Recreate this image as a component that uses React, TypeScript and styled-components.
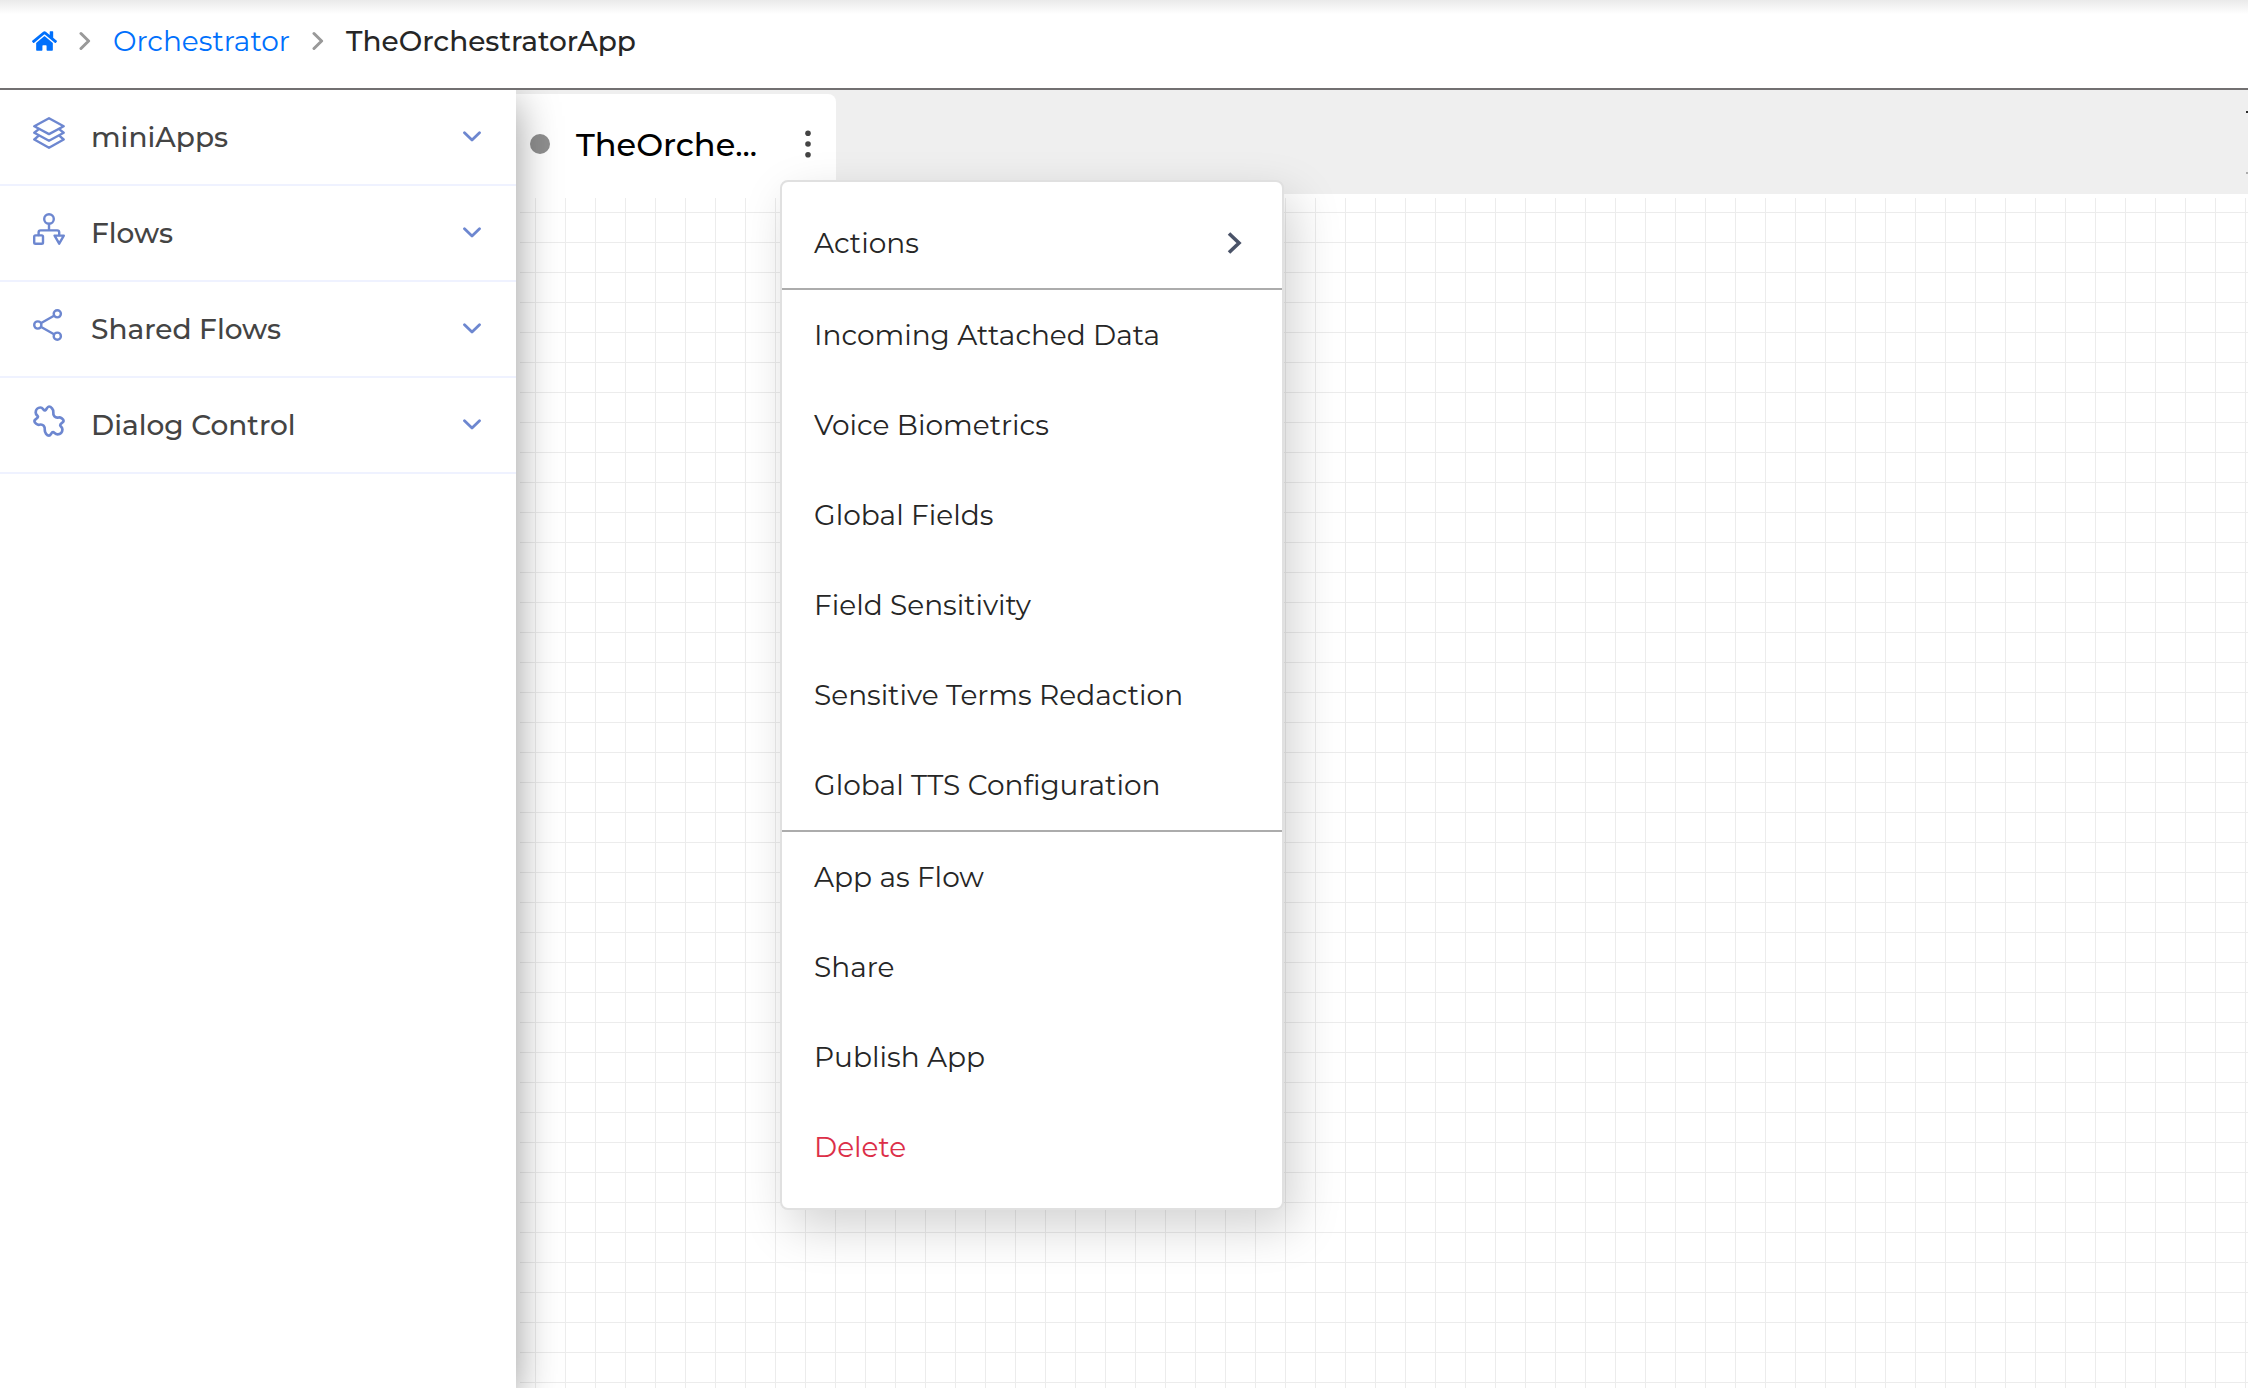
import React from "react";
import styled, { createGlobalStyle } from "styled-components";
import { FaHome } from "react-icons/fa";

const GlobalStyle = createGlobalStyle`
  *, *::before, *::after {
    box-sizing: border-box;
  }
  body {
    margin: 0;
    background: #ffffff;
    color: #262626;
    font-family: Montserrat, "DejaVu Sans", sans-serif;
    font-size: 28px;
    line-height: 36px;
  }
  button {
    border: 0;
    padding: 0;
    background: transparent;
    color: inherit;
    font: inherit;
    text-align: left;
    cursor: pointer;
  }
`;

const Page = styled.div`
  display: flex;
  flex-direction: column;
  min-height: 100vh;
  overflow: hidden;
`;

const Header = styled.header`
  position: relative;
  z-index: 3;
  display: flex;
  align-items: center;
  height: 90px;
  padding: 0 32px 6px;
  border-bottom: 2px solid #727071;
  background: linear-gradient(#eaeaea, #ffffff 14px);
`;

const Breadcrumbs = styled.nav`
  display: flex;
  align-items: center;
  gap: 22px;
`;

const HomeLink = styled.a`
  display: flex;
  color: #0070fc;

  svg {
    width: 25px;
    height: 24px;
  }
`;

const CrumbLink = styled.a`
  color: #0070fc;
  text-decoration: none;
`;

const CrumbCurrent = styled.span`
  font-weight: 500;
`;

const Body = styled.div`
  display: flex;
  flex: 1;
`;

const Sidebar = styled.aside`
  position: relative;
  z-index: 1;
  flex: 0 0 516px;
  background: #ffffff;
  box-shadow: 0 12px 40px rgba(0, 0, 0, 0.4);
`;

const SectionButton = styled.button`
  display: flex;
  align-items: center;
  gap: 26px;
  width: 100%;
  height: 96px;
  padding: 0 34px 0 33px;
  border-bottom: 2px solid #eff2ff;
  color: #444444;
  font-weight: 500;
`;

const SectionIcon = styled.span`
  display: flex;
  height: 40px;
  color: #6d87d0;
`;

const SectionLabel = styled.span`
  flex: 1;
`;

const Workspace = styled.main`
  display: flex;
  flex: 1;
  flex-direction: column;
  min-width: 0;
`;

const TabBar = styled.div`
  display: flex;
  height: 104px;
  padding-top: 4px;
  background: #efefef;
`;

const Tab = styled.div`
  display: flex;
  align-items: center;
  padding-left: 14px;
  border-radius: 0 8px 0 0;
  background: #ffffff;
`;

const StatusDot = styled.span`
  width: 20px;
  height: 20px;
  border-radius: 50%;
  background: #8f8f8f;
`;

const TabTitle = styled.span`
  width: 204px;
  margin-left: 26px;
  padding-top: 2px;
  color: #000000;
  font-size: 32px;
  font-weight: 500;
`;

const MenuAnchor = styled.div`
  position: relative;
  z-index: 2;
`;

const KebabButton = styled.button`
  display: flex;
  align-items: center;
  justify-content: center;
  width: 56px;
  height: 72px;
  color: #444444;
`;

const Menu = styled.div`
  position: absolute;
  top: 100%;
  left: 0;
  width: 504px;
  padding: 0 0 16px;
  border: 2px solid #e0e0e0;
  border-radius: 8px;
  background: #ffffff;
  box-shadow: 10px 18px 48px rgba(0, 0, 0, 0.175);
`;

const MenuGroup = styled.div<{ $first?: boolean }>`
  padding-top: ${(p) => (p.$first ? "16px" : "0")};

  & + & {
    border-top: 2px solid #acacac;
  }
`;

const MenuItem = styled.button<{ $danger?: boolean }>`
  display: flex;
  align-items: center;
  justify-content: space-between;
  width: 100%;
  height: 90px;
  padding: 0 40px 0 32px;
  color: ${(p) => (p.$danger ? "#dc2f48" : "#262626")};
`;

const ToolbarEdge = styled.div`
  width: 2px;
  height: 63px;
  margin: 17px 0 0 auto;
  border-top: 2px solid #2b2b2b;
  border-bottom: 2px solid #acacac;
`;

const Canvas = styled.div`
  flex: 1;
  margin: 4px 0 0 4px;
  background-image: linear-gradient(#ececec 1px, transparent 1px),
    linear-gradient(90deg, #ececec 1px, transparent 1px);
  background-position: 15px 14px;
  background-size: 30px 30px;
`;

function CrumbChevron() {
  return (
    <svg width="12" height="20" viewBox="0 0 12 20" fill="none" stroke="#999999" strokeWidth="3" strokeLinecap="round" strokeLinejoin="round" aria-hidden="true">
      <path d="M2 2.5 L9.6 10 L2 17.5" />
    </svg>
  );
}

function DownChevron() {
  return (
    <svg width="20" height="12" viewBox="0 0 20 12" fill="none" stroke="#6d87d0" strokeWidth="2.8" strokeLinecap="round" strokeLinejoin="round" aria-hidden="true">
      <path d="M2.5 1.7 L10 9 L17.5 1.7" />
    </svg>
  );
}

function SubmenuChevron() {
  return (
    <svg width="15" height="22" viewBox="0 0 15 22" fill="none" stroke="#4a5368" strokeWidth="3.6" aria-hidden="true">
      <path d="M2 1.5 L12 11 L2 20.5" />
    </svg>
  );
}

function KebabDots() {
  return (
    <svg width="8" height="28" viewBox="0 0 8 28" fill="currentColor" aria-hidden="true">
      <circle cx="4" cy="3.3" r="2.8" />
      <circle cx="4" cy="14" r="2.8" />
      <circle cx="4" cy="24.7" r="2.8" />
    </svg>
  );
}

function LineIcon({ children }: { children: React.ReactNode }) {
  return (
    <svg width="32" height="32" viewBox="0 0 32 32" fill="none" stroke="currentColor" strokeWidth="2.4" strokeLinecap="round" strokeLinejoin="round" aria-hidden="true">
      {children}
    </svg>
  );
}

const LayersIcon = () => (
  <LineIcon>
    <path d="M16 1.3 L30.7 9.3 L16 17.1 L1.3 9.3 Z" />
    <path d="M5.2 12.6 L1.3 15.7 L16 23.7 L30.7 15.7 L26.8 12.6" />
    <path d="M5.2 19.1 L1.3 22.5 L16 30.7 L30.7 22.5 L26.8 19.1" />
  </LineIcon>
);

const FlowIcon = () => (
  <LineIcon>
    <circle cx="16" cy="6" r="4.8" />
    <path d="M16 11 V17.4 M5.6 22 V19.4 Q5.6 17.4 7.6 17.4 H24.2 Q26.2 17.4 26.2 19.4 V22" />
    <rect x="1.2" y="22.4" width="8.8" height="8.4" rx="1.3" />
    <path d="M21.6 22.6 H30.8 L26.2 30.7 Z" />
  </LineIcon>
);

const ShareIcon = () => (
  <LineIcon>
    <circle cx="24.3" cy="4.8" r="3.6" />
    <circle cx="4.8" cy="16" r="3.6" />
    <circle cx="24.3" cy="27.2" r="3.6" />
    <path d="M8.2 14 L21 6.7 M8.2 18 L21 25.3" />
  </LineIcon>
);

const PuzzleIcon = () => (
  <LineIcon>
    <path
      strokeWidth="2.7"
      d="M12 5.4 C13.6 4.8 14.2 1.5 16 1.5 C18 1.5 20.6 4.4 20.3 7 C19.9 10.6 22 13.3 25.6 12.5 C27.6 12.1 30.6 14.2 30.6 16 C30.6 17.7 27.2 18.3 27.2 20.2 C27.2 21.4 29.4 22 29.4 24.6 C29.4 27.4 27.4 29.4 24.6 29.4 C22 29.4 21.4 27.2 20 27.2 C18.2 27.2 17.8 30.6 16 30.6 C14 30.6 11.6 27.8 11.8 25.2 C12.2 21.4 10 18.8 6.4 19.7 C4.4 20.2 1.4 17.9 1.4 16 C1.4 14.2 5 13.6 5 11.8 C5 10.6 2.7 10 2.7 7.4 C2.7 4.6 4.8 2.5 7.4 2.5 C10 2.5 10.6 5.8 12 5.4 Z"
    />
  </LineIcon>
);

const sections = [
  { label: "miniApps", Icon: LayersIcon },
  { label: "Flows", Icon: FlowIcon },
  { label: "Shared Flows", Icon: ShareIcon },
  { label: "Dialog Control", Icon: PuzzleIcon },
];

const settingsItems = [
  "Incoming Attached Data",
  "Voice Biometrics",
  "Global Fields",
  "Field Sensitivity",
  "Sensitive Terms Redaction",
  "Global TTS Configuration",
];

const appItems = ["App as Flow", "Share", "Publish App"];

export default function App() {
  return (
    <Page>
      <GlobalStyle />
      <Header>
        <Breadcrumbs aria-label="Breadcrumb">
          <HomeLink href="#home" aria-label="Home">
            <FaHome />
          </HomeLink>
          <CrumbChevron />
          <CrumbLink href="#orchestrator">Orchestrator</CrumbLink>
          <CrumbChevron />
          <CrumbCurrent aria-current="page">TheOrchestratorApp</CrumbCurrent>
        </Breadcrumbs>
      </Header>
      <Body>
        <Sidebar>
          {sections.map(({ label, Icon }) => (
            <SectionButton key={label} type="button" aria-expanded={false}>
              <SectionIcon>
                <Icon />
              </SectionIcon>
              <SectionLabel>{label}</SectionLabel>
              <DownChevron />
            </SectionButton>
          ))}
        </Sidebar>
        <Workspace>
          <TabBar>
            <Tab>
              <StatusDot />
              <TabTitle>TheOrche...</TabTitle>
              <MenuAnchor>
                <KebabButton type="button" aria-label="App menu" aria-haspopup="menu" aria-expanded>
                  <KebabDots />
                </KebabButton>
                <Menu role="menu">
                  <MenuGroup $first>
                    <MenuItem type="button" role="menuitem" aria-haspopup="menu">
                      Actions
                      <SubmenuChevron />
                    </MenuItem>
                  </MenuGroup>
                  <MenuGroup>
                    {settingsItems.map((item) => (
                      <MenuItem key={item} type="button" role="menuitem">
                        {item}
                      </MenuItem>
                    ))}
                  </MenuGroup>
                  <MenuGroup>
                    {appItems.map((item) => (
                      <MenuItem key={item} type="button" role="menuitem">
                        {item}
                      </MenuItem>
                    ))}
                    <MenuItem type="button" role="menuitem" $danger>
                      Delete
                    </MenuItem>
                  </MenuGroup>
                </Menu>
              </MenuAnchor>
            </Tab>
            <ToolbarEdge />
          </TabBar>
          <Canvas />
        </Workspace>
      </Body>
    </Page>
  );
}
